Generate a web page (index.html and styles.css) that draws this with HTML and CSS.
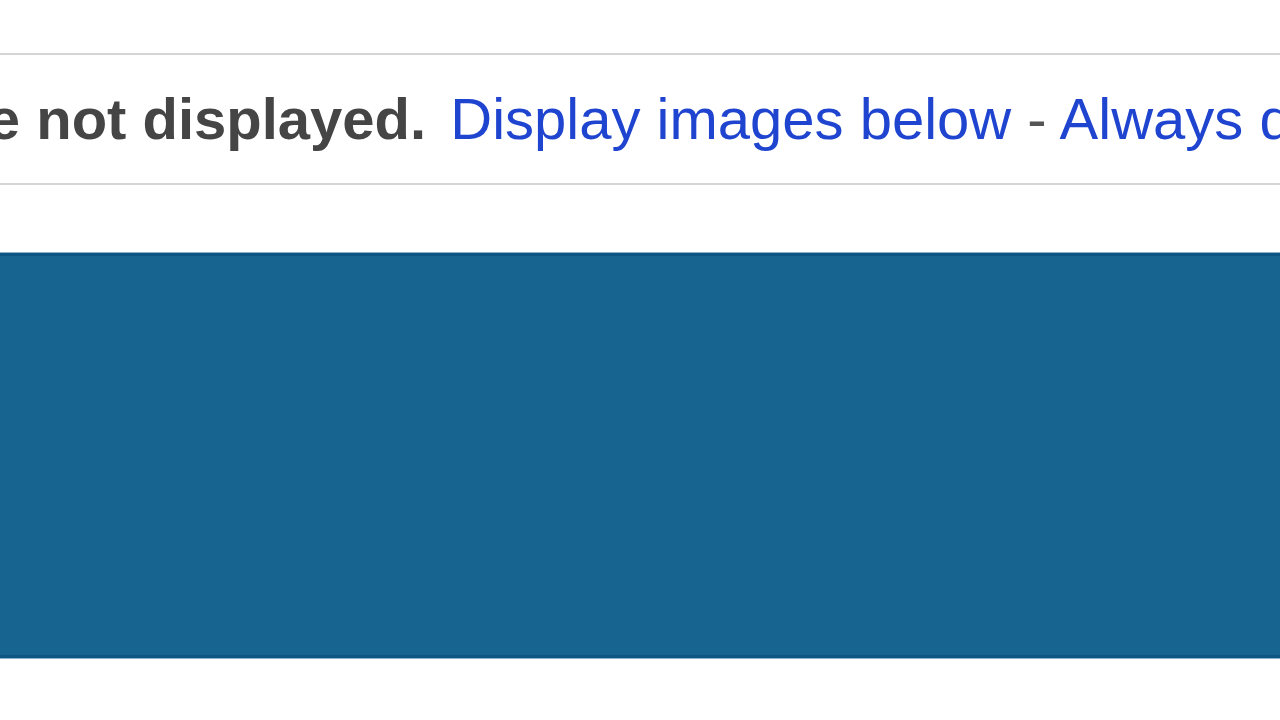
FILE: index.html
```html
<!DOCTYPE html>
<html lang="en">
<head>
<meta charset="utf-8">
<title>Images are not displayed</title>
<link rel="stylesheet" href="styles.css">
</head>
<body>
<div class="page">
  <div class="notice">
    <div class="notice-line">
      <strong class="notice-title">Images are not displayed.</strong>
      <a class="notice-link link-first" href="#">Display images below</a>
      <span class="notice-sep">-</span>
      <a class="notice-link" href="#">Always display images from this sender</a>
    </div>
  </div>
  <div class="banner"></div>
</div>
</body>
</html>
```

FILE: styles.css
```css
html, body {
  margin: 0;
  padding: 0;
  background: #ffffff;
}

.page {
  width: 1280px;
  height: 720px;
  overflow: hidden;
  padding-top: 53px;
  box-sizing: border-box;
}

.notice {
  height: 128px;
  border-top: 2px solid #d5d5d5;
  border-bottom: 2px solid #d5d5d5;
  display: flex;
  align-items: center;
  overflow: hidden;
}

.notice-line {
  white-space: nowrap;
  margin-left: -283px;
  font-family: "Liberation Sans", Arial, sans-serif;
  font-size: 58px;
  line-height: 1;
}

.notice-title {
  font-weight: bold;
  color: #454545;
}

.notice-link {
  color: #1f44cf;
  text-decoration: none;
}

.link-first {
  margin-left: 8px;
}

.notice-sep {
  color: #555555;
}

.banner {
  margin-top: 68px;
  height: 405px;
  box-sizing: border-box;
  background: #186491;
  border-top: 3px solid #0f5583;
  border-bottom: 3px solid #0f5583;
  box-shadow: 0 -1px 0 #8db2cc, 0 1px 0 #8db2cc;
}
```
